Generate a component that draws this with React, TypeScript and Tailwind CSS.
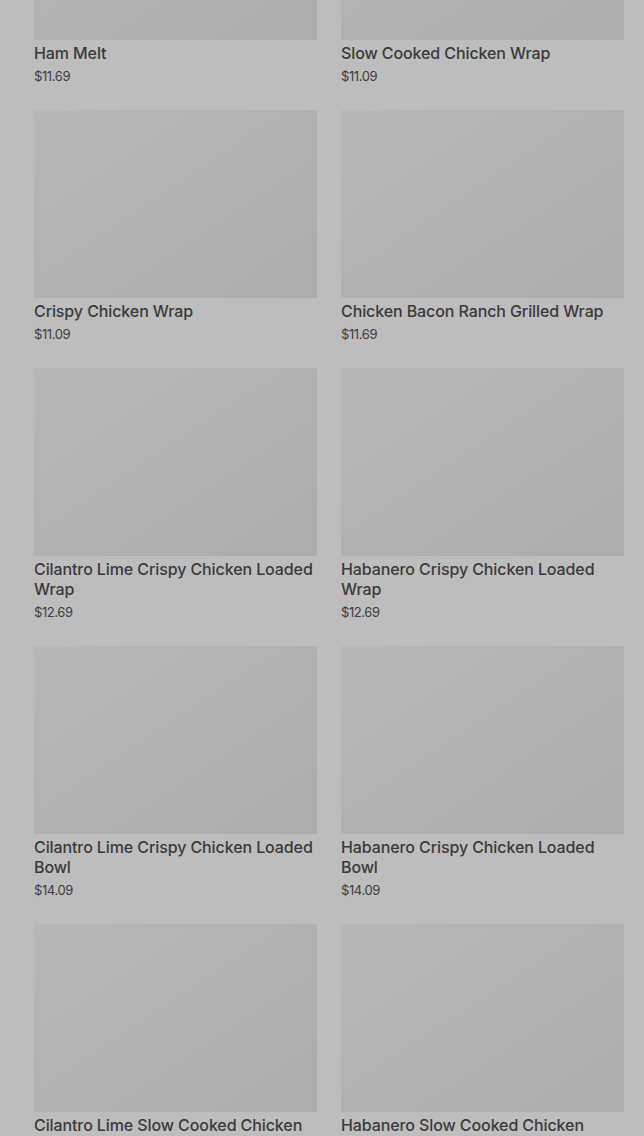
import React from "react";

const items: { name: string; price: string }[] = [
  { name: "Ham Melt", price: "$11.69" },
  { name: "Slow Cooked Chicken Wrap", price: "$11.09" },
  { name: "Crispy Chicken Wrap", price: "$11.09" },
  { name: "Chicken Bacon Ranch Grilled Wrap", price: "$11.69" },
  { name: "Cilantro Lime Crispy Chicken Loaded Wrap", price: "$12.69" },
  { name: "Habanero Crispy Chicken Loaded Wrap", price: "$12.69" },
  { name: "Cilantro Lime Crispy Chicken Loaded Bowl", price: "$14.09" },
  { name: "Habanero Crispy Chicken Loaded Bowl", price: "$14.09" },
  { name: "Cilantro Lime Slow Cooked Chicken Loaded Wrap", price: "$12.69" },
  { name: "Habanero Slow Cooked Chicken Loaded Wrap", price: "$12.69" },
];

export default function App() {
  return (
    <div
      className="w-[644px] h-[1136px] overflow-hidden bg-[#bdbdbd]"
      style={{ fontFamily: "Inter, 'Noto Sans', sans-serif" }}
    >
      <div className="mt-[-148px] pl-[34px] pr-[20px] grid grid-cols-2 gap-x-[24px] gap-y-[25px]">
        {items.map((it) => (
          <div key={it.name} className="flex flex-col">
            <div className="h-[188px] bg-gradient-to-br from-[#b7b7b7] via-[#b1b1b1] to-[#acacac]" />
            <div className="mt-[3px] text-[16px] leading-[20px] font-medium text-[#3a3a3a] tracking-[-0.1px]">
              {it.name}
            </div>
            <div className="mt-[4px] text-[13px] leading-[18px] text-[#3d3d3d] tracking-[-0.4px]">
              {it.price}
            </div>
          </div>
        ))}
      </div>
    </div>
  );
}
